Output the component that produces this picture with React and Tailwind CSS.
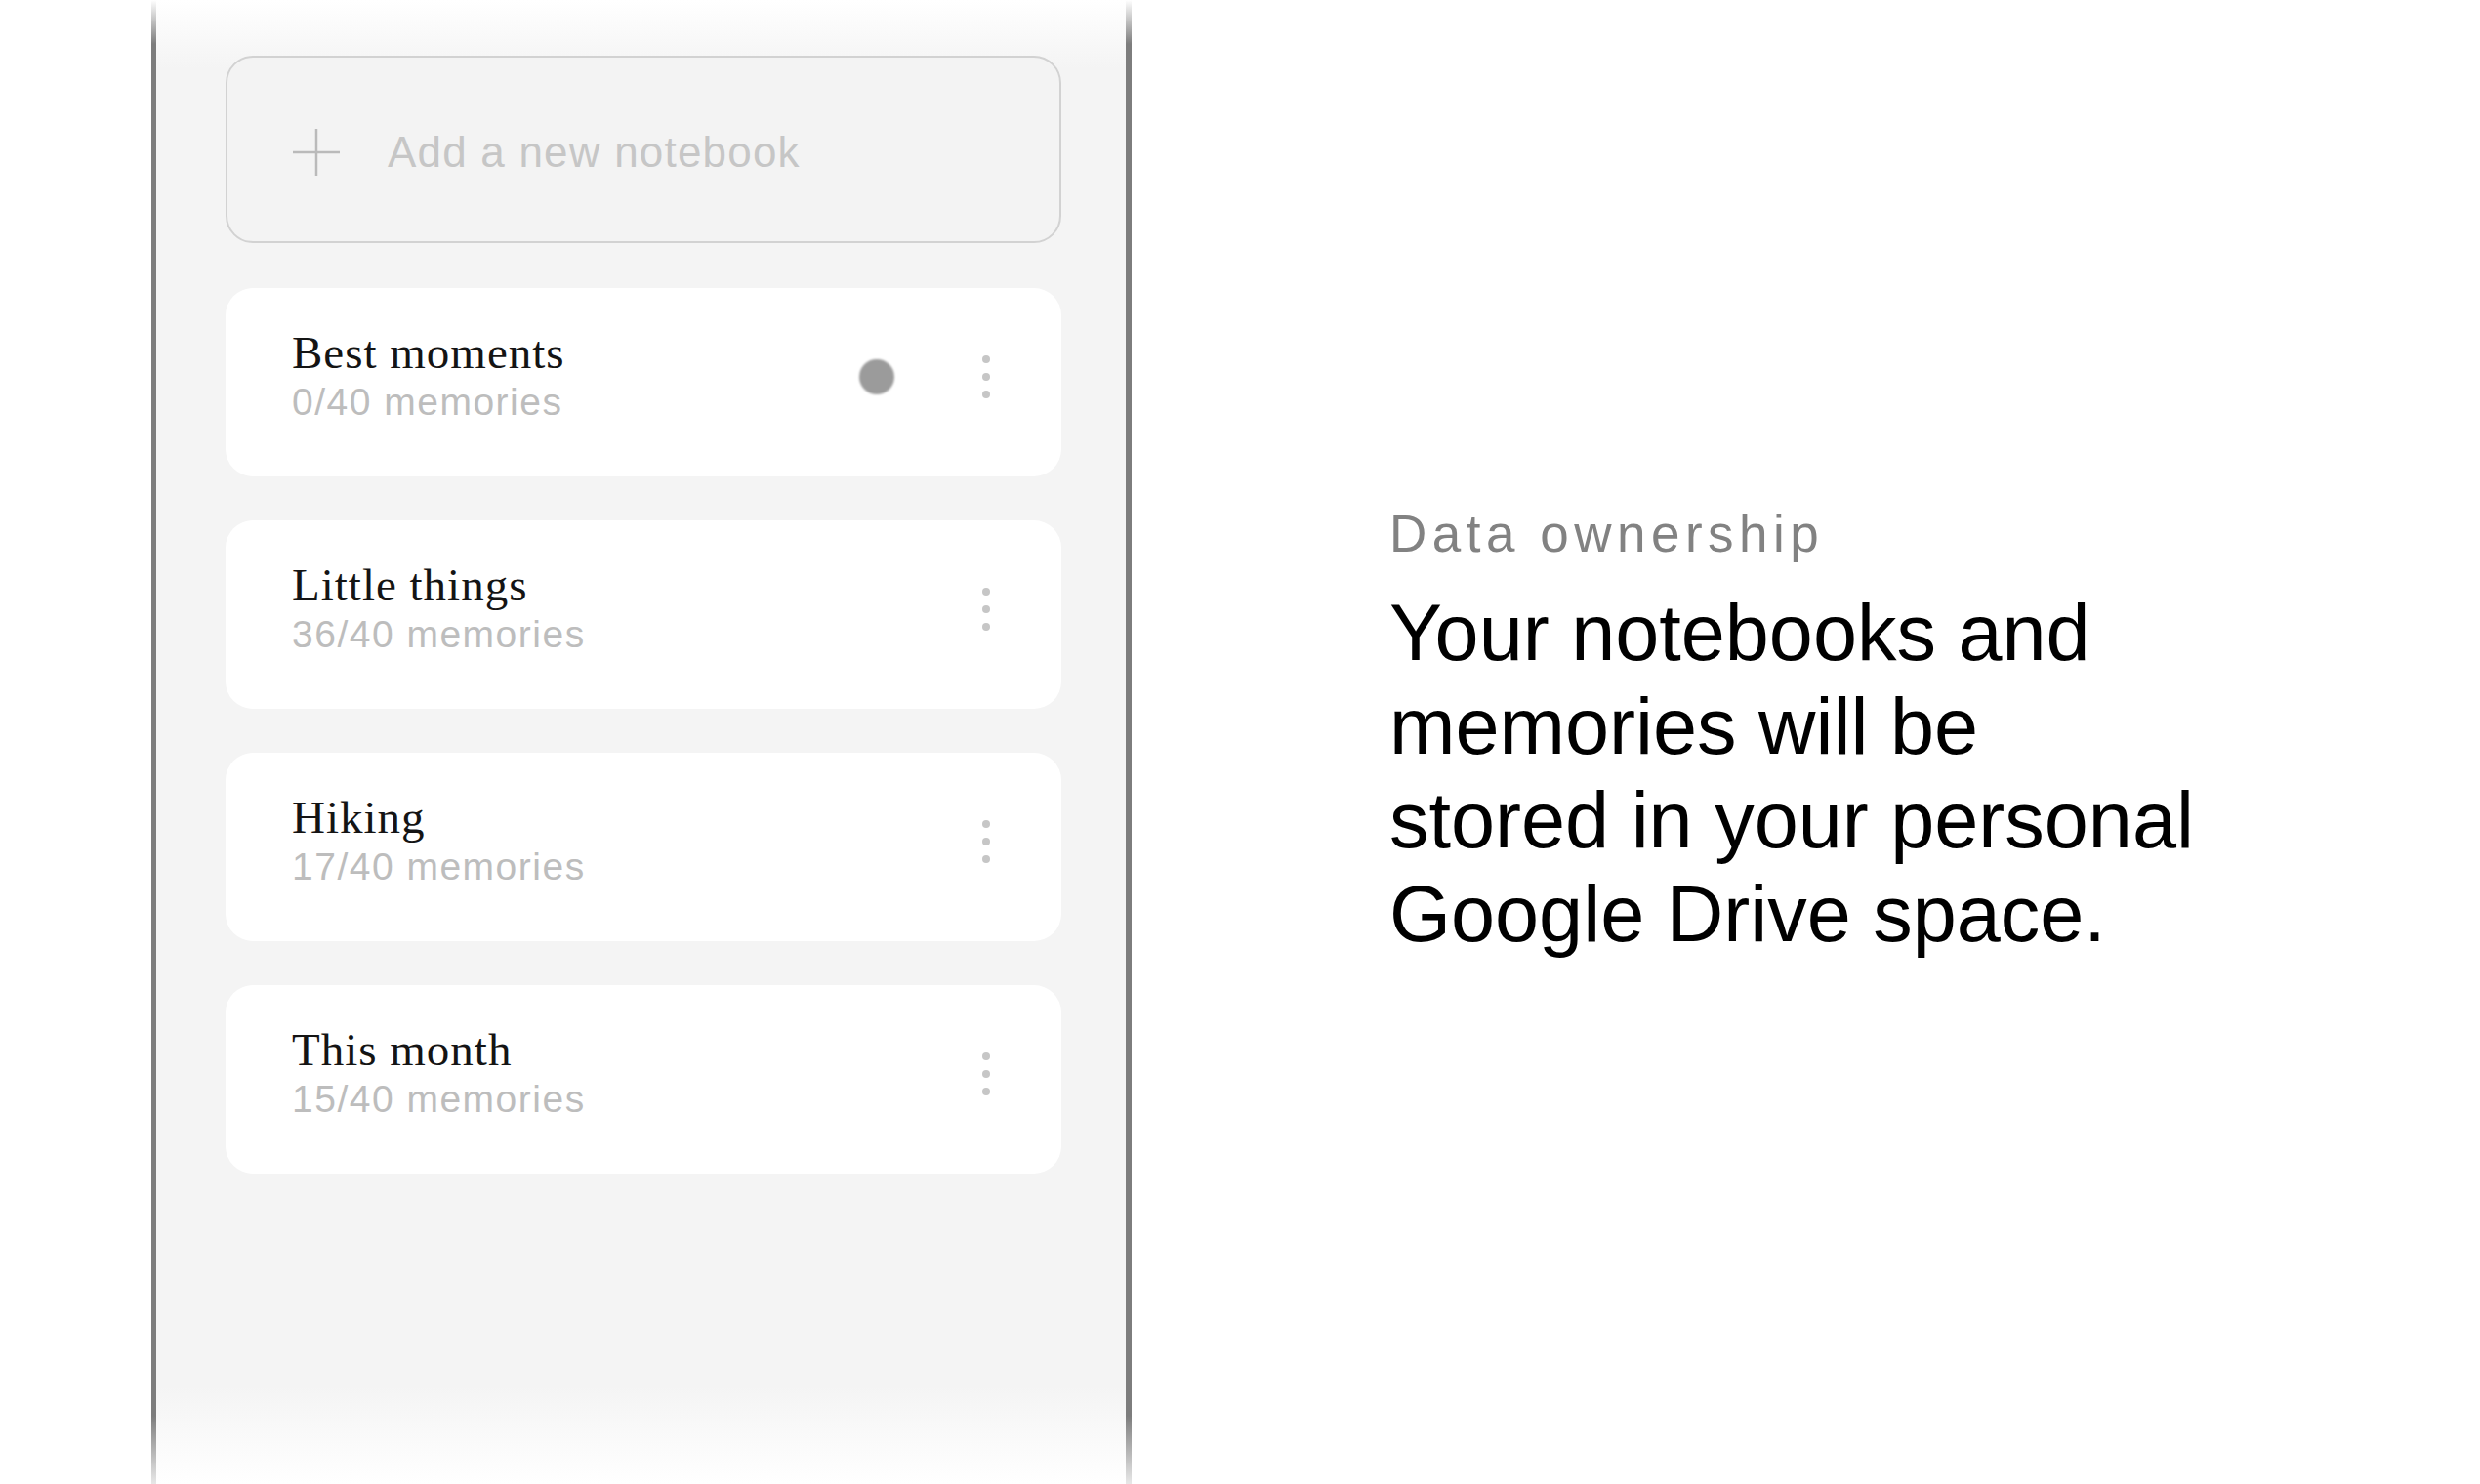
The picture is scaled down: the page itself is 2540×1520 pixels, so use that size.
import React from "react";

const cards = [
  { title: "Best moments", sub: "0/40 memories", dot: true },
  { title: "Little things", sub: "36/40 memories" },
  { title: "Hiking", sub: "17/40 memories" },
  { title: "This month", sub: "15/40 memories" },
];

function Kebab() {
  return (
    <div className="flex flex-col items-center gap-[10px]">
      <span className="block h-[8px] w-[8px] rounded-full bg-[#c6c6c6]" />
      <span className="block h-[8px] w-[8px] rounded-full bg-[#c6c6c6]" />
      <span className="block h-[8px] w-[8px] rounded-full bg-[#c6c6c6]" />
    </div>
  );
}

function NotebookCard({ title, sub, dot }) {
  return (
    <div className="flex h-[193px] w-[856px] items-center rounded-[28px] bg-white pb-[11px] pl-[68px] pr-[73px]">
      <div className="flex flex-1 flex-col">
        <div className="text-[47px] leading-[47px] tracking-[1px] text-[#141414] [font-family:'Liberation_Serif',serif]">
          {title}
        </div>
        <div className="mt-[5px] text-[39px] leading-[44px] tracking-[1.5px] text-[#bdbdbd] [font-family:'Liberation_Sans',sans-serif]">
          {sub}
        </div>
      </div>
      {dot && (
        <span className="mr-[90px] block h-[36px] w-[36px] rounded-full bg-[#9b9b9b] blur-[1.2px]" />
      )}
      <Kebab />
    </div>
  );
}

export default function App() {
  return (
    <div className="flex h-[1520px] w-[2540px] overflow-hidden bg-white">
      <div className="ml-[155px] flex h-full w-[1004px]">
        <div className="h-full w-[5px] bg-[linear-gradient(to_bottom,#ffffff_0px,#7d7d7d_45px,#7d7d7d_1450px,#e8e8e8_1520px)]" />
        <div className="flex h-full flex-1 flex-col gap-[45px] bg-[linear-gradient(to_bottom,#ffffff_0px,#f4f4f4_70px,#f4f4f4_1420px,#ffffff_1520px)] pl-[71px] pt-[57px]">
          <div className="mb-px flex h-[192px] w-[856px] items-center rounded-[28px] border-2 border-[#d2d2d2] bg-[#f3f3f3] pl-[67px] pt-[6px]">
            <svg width="48" height="48" viewBox="0 0 48 48" className="shrink-0">
              <path d="M24 0 V48 M0 24 H48" stroke="#bababa" strokeWidth="2.5" fill="none" />
            </svg>
            <span className="ml-[49px] text-[44px] leading-[52px] tracking-[1.2px] text-[#c6c6c6] [font-family:'Liberation_Sans',sans-serif]">
              Add a new notebook
            </span>
          </div>
          {cards.map((c) => (
            <NotebookCard key={c.title} {...c} />
          ))}
        </div>
        <div className="h-full w-[6px] bg-[linear-gradient(to_bottom,#ffffff_0px,#7d7d7d_45px,#7d7d7d_1450px,#e8e8e8_1520px)]" />
      </div>
      <div className="ml-[264px] flex flex-col pt-[516px] [font-family:'Liberation_Sans',sans-serif]">
        <div className="text-[53px] leading-[62px] tracking-[5.5px] text-[#828282]">Data ownership</div>
        <div className="mt-[22px] text-[81px] leading-[96px] text-black">
          Your notebooks and
          <br />
          memories will be
          <br />
          stored in your personal
          <br />
          Google Drive space.
        </div>
      </div>
    </div>
  );
}
